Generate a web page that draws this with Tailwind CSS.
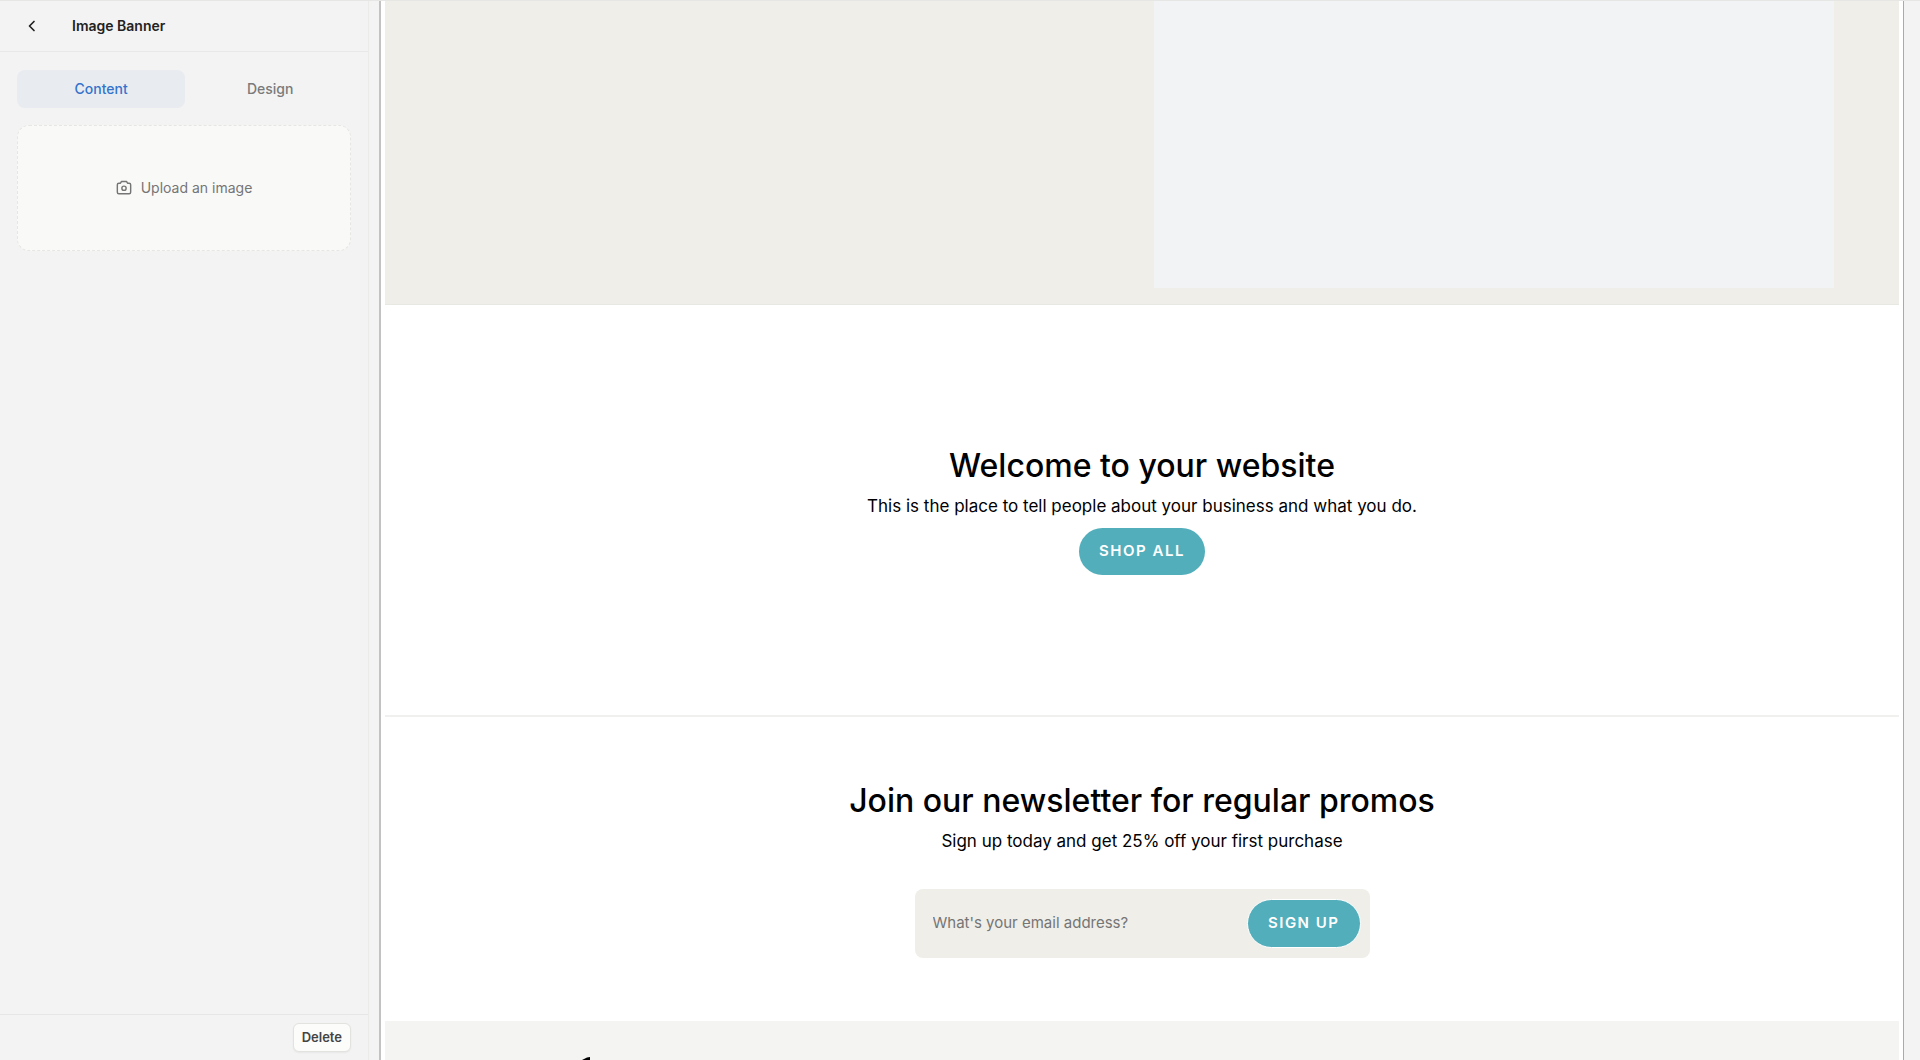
<!DOCTYPE html>
<html lang="en">
<head>
    <meta charset="UTF-8">
    <meta name="viewport" content="width=device-width, initial-scale=1.0">
    <title>Image Banner - Site Editor</title>
    <script src="https://cdn.jsdelivr.net/npm/@tailwindcss/browser@4"></script>
</head>
<body class="font-['Inter',sans-serif] bg-[#f3f3f3]">
    <div class="flex h-screen overflow-hidden border-t border-[#e6e6e4]">
        <!-- Settings panel -->
        <aside class="flex w-[369px] shrink-0 flex-col border-r border-[#ebebe8]">
            <header class="flex h-[51px] items-center border-b border-[#e8e8e6] px-5">
                <button type="button" aria-label="Back" class="flex size-6 items-center justify-center text-[#222]">
                    <svg class="size-6" viewBox="0 0 24 24" fill="none" stroke="currentColor" stroke-width="1.7" stroke-linecap="round" stroke-linejoin="round"><path d="M14 7.500 9.500 12l4.500 4.500"/></svg>
                </button>
                <h1 class="ml-7 text-sm font-semibold text-[#222]">Image Banner</h1>
            </header>

            <div class="flex flex-1 flex-col gap-[17px] px-[17px] pt-[18px]">
                <div class="flex gap-1">
                    <button type="button" class="h-[38px] flex-auto rounded-lg bg-[#e8ebf0] text-sm font-medium text-[#3373cc]">Content</button>
                    <button type="button" class="h-[38px] flex-auto rounded-lg text-sm font-medium text-[#7a7a7a]">Design</button>
                </div>
                <button type="button" class="flex h-[126px] items-center justify-center gap-[9px] rounded-xl border border-dashed border-[#e6e6e2] bg-[#f9f9f8] text-sm text-[#757575]">
                    <svg class="size-4" viewBox="0 0 18 18" fill="none" stroke="currentColor" stroke-width="1.6" stroke-linejoin="round"><path d="M3.200 3.700h1.600l1.400-2h5.600l1.400 2h1.600c1 0 1.700.7 1.700 1.700v8.300c0 1-.7 1.700-1.700 1.700H3.200c-1 0-1.700-.7-1.700-1.700V5.400c0-1 .7-1.700 1.700-1.700z"/><circle cx="9" cy="9.300" r="2.400"/></svg>
                    Upload an image
                </button>
            </div>

            <footer class="flex h-[46px] items-center justify-end border-t border-[#e6e6e6] px-[17px]">
                <button type="button" class="h-[29px] rounded-md border border-[#e2e2de] bg-[#fcfcfb] px-2 text-[13px] font-semibold text-[#444] shadow-xs">Delete</button>
            </footer>
        </aside>

        <!-- Site preview -->
        <main class="ml-[10px] mr-4 flex min-w-0 flex-1 flex-col overflow-hidden border-l-2 border-r border-l-[#c2c2c2] border-r-[#aaa] bg-white px-1">
            <section class="grid h-[304px] shrink-0 grid-cols-[769fr_680fr] border-b border-[#e8e8e2] bg-[#efeee9] pr-[65px] pb-4">
                <div></div>
                <div class="bg-[#f2f3f5]"></div>
            </section>

            <section class="flex h-[412px] shrink-0 flex-col items-center justify-center border-b-2 border-[#f0f0ee] text-center text-black">
                <h2 class="text-[32px] leading-10 font-medium">Welcome to your website</h2>
                <p class="mt-2 text-[17px] leading-6">This is the place to tell people about your business and what you do.</p>
                <a href="#" class="mt-[10px] flex h-[47px] items-center rounded-full bg-[#52aebb] px-5 text-[15px] font-semibold tracking-widest text-white">SHOP ALL</a>
            </section>

            <section class="flex h-[304px] shrink-0 flex-col items-center pt-[64px] text-center text-black">
                <h2 class="text-[32px] leading-10 font-medium">Join our newsletter for regular promos</h2>
                <p class="mt-2 text-[17px] leading-6">Sign up today and get 25% off your first purchase</p>
                <form class="mt-9 flex h-[69px] w-[455px] items-center rounded-lg bg-[#efeee9] pr-[9px] pl-[18px]">
                    <input type="email" aria-label="Email address" placeholder="What's your email address?" class="min-w-0 flex-1 text-[15px] placeholder-[#757575] outline-none">
                    <button type="submit" class="h-[49px] rounded-full border border-white bg-[#52aebb] px-5 text-[15px] font-semibold tracking-widest text-white">SIGN UP</button>
                </form>
            </section>

            <!-- Site footer, logo starts at the bottom edge -->
            <footer class="flex-1 overflow-hidden bg-[#f4f4f2] pt-9 pl-[195px]">
                <svg class="h-4 w-3" viewBox="0 0 12 16" fill="#000"><path d="M2 3 7 .5 10 0v16H6V3z"/></svg>
            </footer>
        </main>
    </div>
</body>
</html>
